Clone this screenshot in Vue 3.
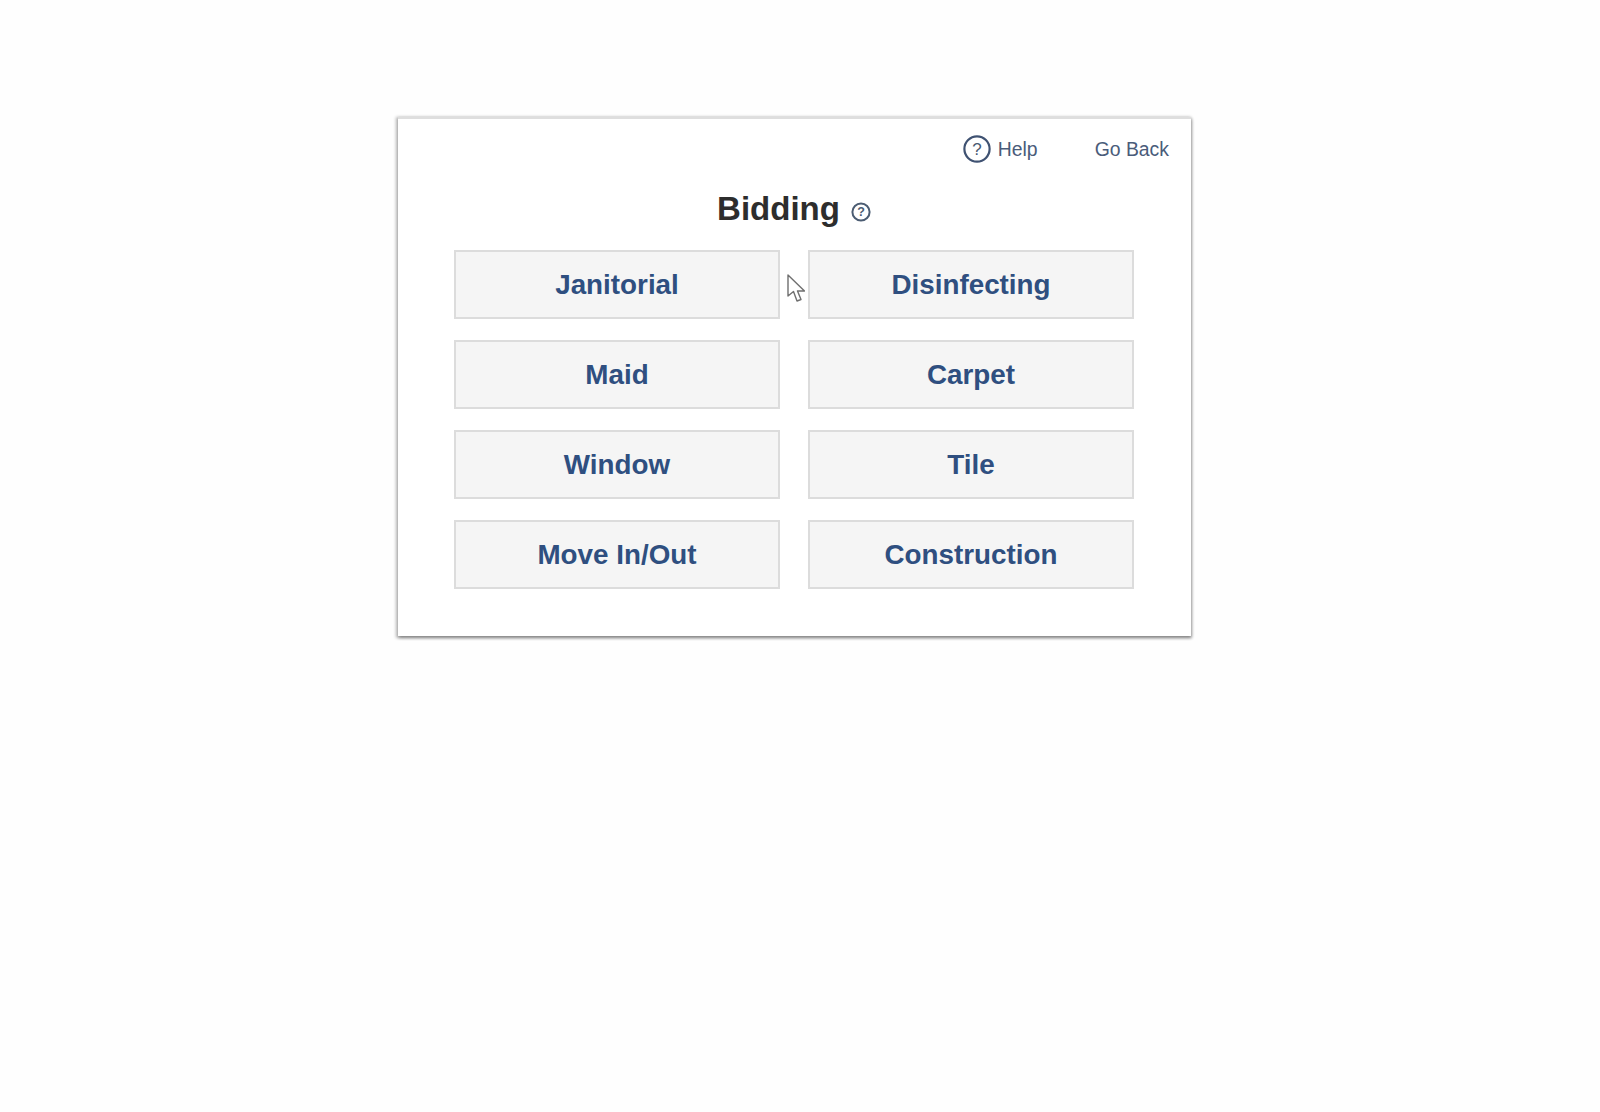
<template>
  <div class="page">
    <div class="card">
      <div class="top-links">
        <a class="link help-link">
          <svg class="help-icon" viewBox="0 0 28 28" width="28" height="28">
            <circle cx="14" cy="14" r="12.6" fill="none" stroke="#3f5272" stroke-width="2.2" />
            <text x="14" y="20" text-anchor="middle" class="q">?</text>
          </svg>
          Help
        </a>
        <a class="link">Go Back</a>
      </div>

      <div class="title-row">
        <h1>Bidding</h1>
        <svg class="title-icon" viewBox="0 0 20 20" width="20" height="20">
          <circle cx="10" cy="10" r="8.6" fill="none" stroke="#4b5c72" stroke-width="2" />
          <text x="10" y="14.4" text-anchor="middle" class="q-small">?</text>
        </svg>
      </div>

      <div class="options">
        <button v-for="item in services" :key="item" class="option">{{ item }}</button>
      </div>

      <!-- mouse pointer caught in the shot -->
      <svg class="cursor" viewBox="0 0 18 29" width="18" height="29">
        <path d="M1 1 L1 22 L6.5 17.5 L10 27 L14 25.5 L10.5 17 L17.5 17 Z" fill="#fff" stroke="#6f6f6f" stroke-width="1.4" stroke-linejoin="round" />
      </svg>
    </div>
  </div>
</template>

<script setup>
const services = [
  'Janitorial',
  'Disinfecting',
  'Maid',
  'Carpet',
  'Window',
  'Tile',
  'Move In/Out',
  'Construction'
];
</script>

<style>
html, body {
  background: #fefefe;
}
</style>

<style scoped>
.page {
  height: 1112px;
  padding: 117px 0 0 398px;
  box-sizing: border-box;
  font-family: "Liberation Sans", Arial, sans-serif;
}

.card {
  position: relative;
  width: 793px;
  height: 519px;
  box-sizing: border-box;
  background: #fff;
  border-top: 2px solid #dedede;
  padding: 0 56px;
  box-shadow: -1px 1px 3px 1px rgba(0, 0, 0, 0.28), 1px 2px 3px rgba(0, 0, 0, 0.3);
}

.top-links {
  display: flex;
  justify-content: flex-end;
  align-items: center;
  gap: 57px;
  height: 60px;
  margin-right: -34px;
}

.link {
  display: flex;
  align-items: center;
  gap: 6.5px;
  color: #4a5c7a;
  font-size: 19.4px;
}

.help-icon {
  margin-top: -1px;
}

.q {
  font-size: 17px;
  fill: #4a5a72;
  font-family: "Liberation Sans", Arial, sans-serif;
}

.q-small {
  font-size: 12.5px;
  font-weight: 700;
  fill: #4b5c72;
  font-family: "Liberation Sans", Arial, sans-serif;
}

.title-row {
  display: flex;
  justify-content: center;
  align-items: center;
  gap: 11px;
  height: 56px;
  margin-top: 2px;
  padding-right: 1px;
}

h1 {
  margin: 0;
  font-size: 33px;
  font-weight: 700;
  color: #2d2d2d;
}

.title-icon {
  margin-top: 5px;
}

.options {
  display: grid;
  grid-template-columns: 326px 326px;
  grid-auto-rows: 69px;
  column-gap: 28px;
  row-gap: 21px;
  margin-top: 13px;
}

.option {
  background: #f5f5f5;
  border: 2px solid #dcdcdc;
  color: #2f4f80;
  font-family: inherit;
  font-size: 27.8px;
  font-weight: 700;
  padding: 0;
}

.cursor {
  position: absolute;
  left: 389px;
  top: 155px;
}
</style>
